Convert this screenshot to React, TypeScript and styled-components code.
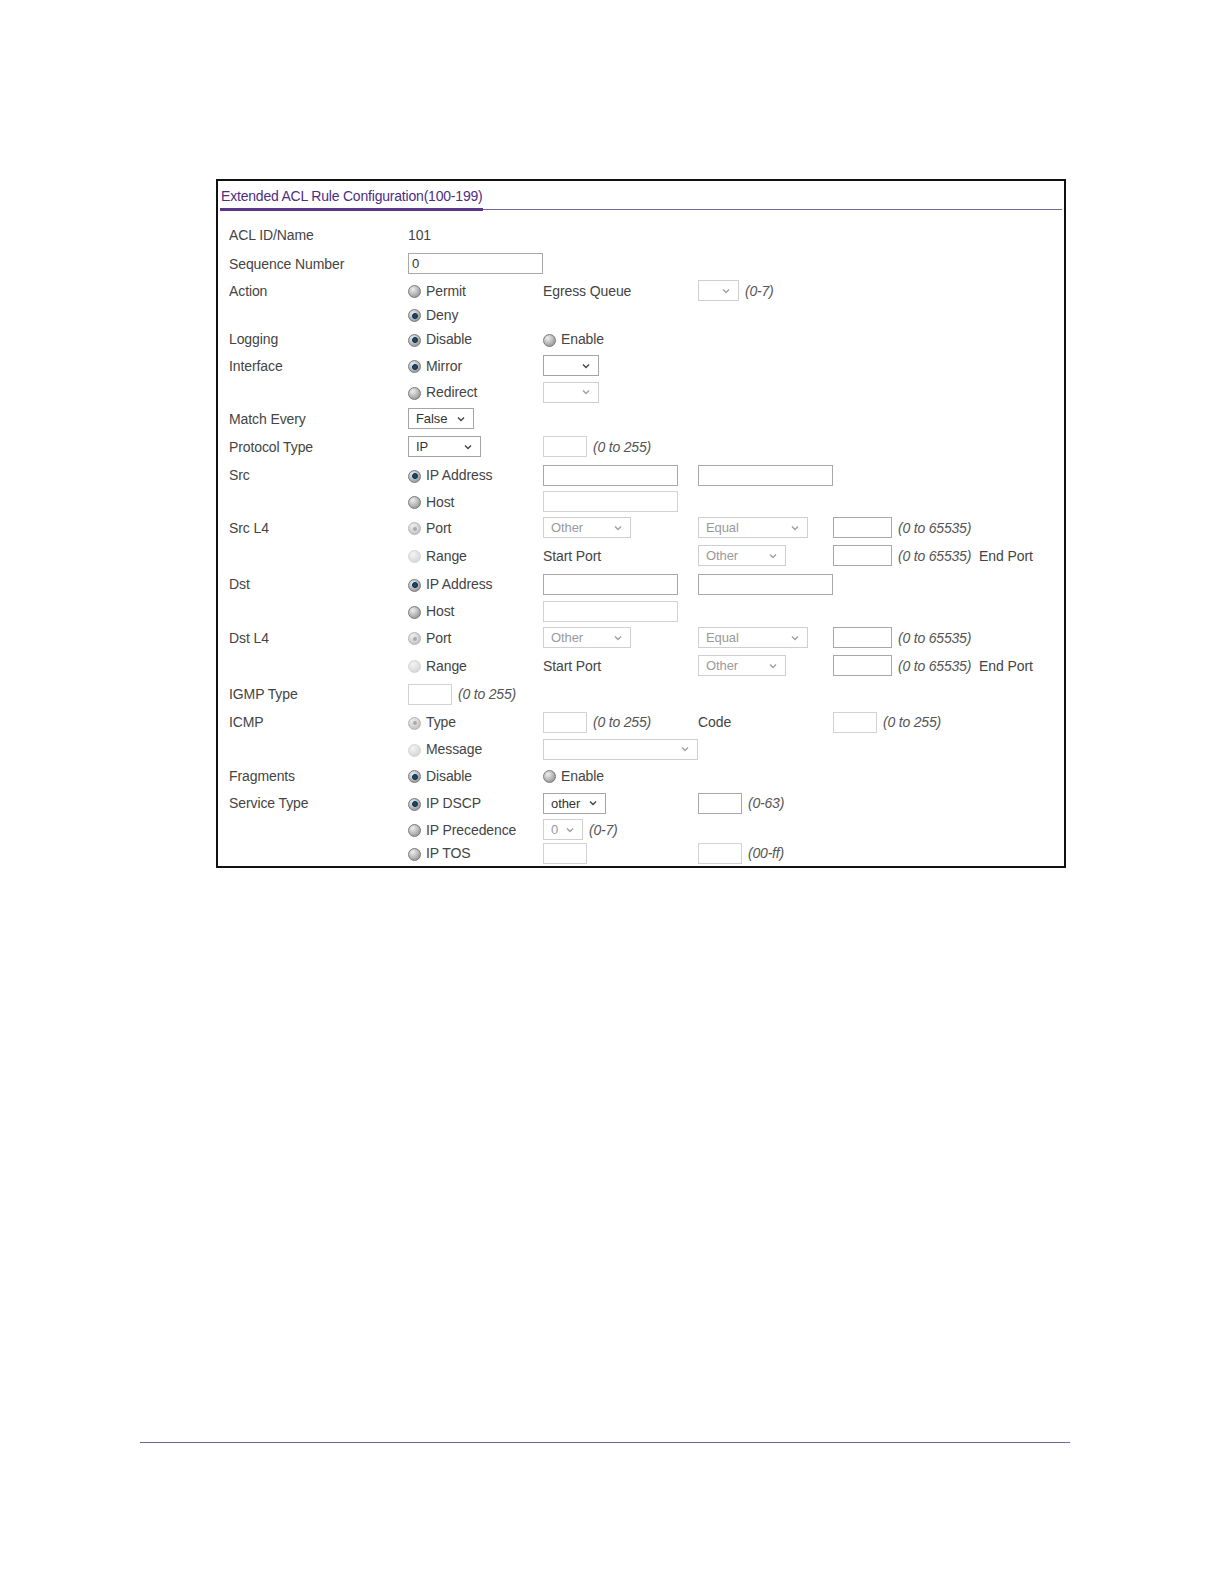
import React from "react";
import styled, { createGlobalStyle, css } from "styled-components";

const GlobalStyle = createGlobalStyle`
  html, body {
    margin: 0;
    padding: 0;
    background: #ffffff;
    overflow: hidden;
  }
  body {
    font-family: "Liberation Sans", Arial, sans-serif;
    font-size: 14px;
    color: #444444;
  }
`;

const Page = styled.div`
  height: 100vh;
  padding-top: 179px;
  box-sizing: border-box;
  display: flex;
  flex-direction: column;
`;

const Frame = styled.div`
  margin-left: 216px;
  width: 850px;
  box-sizing: border-box;
  border: 2px solid #111111;
  padding-bottom: 2px;
`;

const TitleBar = styled.div`
  margin: 0 2px 0 2px;
  height: 28px;
  display: flex;
  align-items: flex-end;
  border-bottom: 1px solid #7c6397;
`;

const Title = styled.span`
  color: #4f2d7f;
  font-size: 14px;
  letter-spacing: -0.2px;
  padding: 0 0 3px 1px;
  border-bottom: 3px solid #5a3688;
  margin-bottom: -2px;
  line-height: 17px;
`;

const Body = styled.div`
  padding: 10px 0 0 11px;
`;

const Row = styled.div<{ $h: number }>`
  height: ${(p) => p.$h}px;
  display: flex;
  align-items: center;
  white-space: nowrap;
`;

const Cell = styled.div<{ $w?: number }>`
  ${(p) =>
    p.$w
      ? css`
          width: ${p.$w}px;
          flex: none;
        `
      : css`
          flex: 1;
        `}
  display: flex;
  align-items: center;
  gap: 6px;
  letter-spacing: -0.1px;
`;

const Hint = styled.span`
  font-style: italic;
  color: #555555;
  letter-spacing: -0.2px;
`;

const Text = styled.span<{ $pad?: number }>`
  color: #444444;
  padding-left: ${(p) => p.$pad ?? 0}px;
`;

const Input = styled.div<{ $w: number; $dim?: boolean; $h?: number }>`
  width: ${(p) => p.$w}px;
  height: ${(p) => p.$h ?? 21}px;
  box-sizing: border-box;
  border: 1px solid ${(p) => (p.$dim ? "#d2d2d2" : "#a8a8a8")};
  background: #ffffff;
  font-size: 13px;
  line-height: 19px;
  padding-left: 3px;
  color: #333333;
`;

const SelectBox = styled.div<{ $w: number; $dim?: boolean }>`
  width: ${(p) => p.$w}px;
  height: 21px;
  box-sizing: border-box;
  border: 1px solid ${(p) => (p.$dim ? "#cfcfcf" : "#a5a5a5")};
  background: #ffffff;
  display: flex;
  align-items: center;
  justify-content: space-between;
  padding: 0 8px 0 7px;
  font-size: 13px;
  color: ${(p) => (p.$dim ? "#9a9a9a" : "#333333")};
`;

const Chevron = styled.svg<{ $dim?: boolean }>`
  width: 8px;
  height: 6px;
  flex: none;
  stroke: ${(p) => (p.$dim ? "#a0a0a0" : "#444444")};
  fill: none;
  stroke-width: 1.4;
`;

const Select = ({ w, value, dim }: { w: number; value?: string; dim?: boolean }) => (
  <SelectBox $w={w} $dim={dim}>
    <span>{value ?? ""}</span>
    <Chevron $dim={dim} viewBox="0 0 8 6">
      <path d="M1 1.5 L4 4.5 L7 1.5" />
    </Chevron>
  </SelectBox>
);

type RadioState = "on" | "off" | "dimOn" | "dimOff";

const RadioDot = styled.span<{ $s: RadioState }>`
  width: 13px;
  height: 13px;
  border-radius: 50%;
  flex: none;
  box-sizing: border-box;
  margin-top: 2px;
  position: relative;
  ${(p) =>
    p.$s === "dimOff"
      ? css`
          background: radial-gradient(circle at 35% 30%, #f4f4f4 0%, #dadada 70%, #cccccc 100%);
          border: 1px solid #d4d4d4;
        `
      : p.$s === "dimOn"
      ? css`
          background: radial-gradient(circle at 35% 30%, #f0f0f0 0%, #c4c4c4 75%, #b0b0b0 100%);
          border: 1px solid #b5b5b5;
        `
      : css`
          background: radial-gradient(circle at 35% 30%, #eeeeee 0%, #a8a8a8 65%, #808080 100%);
          border: 1px solid #7a7a7a;
        `}
  ${(p) =>
    (p.$s === "on" || p.$s === "dimOn") &&
    css`
      &::after {
        content: "";
        position: absolute;
        left: 2.5px;
        top: 2.5px;
        width: 6px;
        height: 6px;
        border-radius: 50%;
        box-sizing: border-box;
        background: ${p.$s === "on" ? "#17486f" : "#a9a9a9"};
        border: 1px solid ${p.$s === "on" ? "#0d2c47" : "#e2e2e2"};
      }
    `}
`;

const RadioWrap = styled.span`
  display: inline-flex;
  align-items: center;
  gap: 5px;
  color: #444444;
`;

const Radio = ({ s, label }: { s: RadioState; label: string }) => (
  <RadioWrap>
    <RadioDot $s={s} />
    <span>{label}</span>
  </RadioWrap>
);

const BottomRule = styled.div`
  margin: auto 0 141px 140px;
  width: 930px;
  height: 1px;
  flex: none;
  background: #7b5e98;
`;

const W = { label: 179, c2: 135, c3: 155, c4: 135 };

const L4Rows = ({ label }: { label: string }) => (
  <>
    <Row $h={27}>
      <Cell $w={W.label}>{label}</Cell>
      <Cell $w={W.c2}>
        <Radio s="dimOn" label="Port" />
      </Cell>
      <Cell $w={W.c3}>
        <Select w={88} value="Other" dim />
      </Cell>
      <Cell $w={W.c4}>
        <Select w={110} value="Equal" dim />
      </Cell>
      <Cell>
        <Input $w={59} />
        <Hint>(0 to 65535)</Hint>
      </Cell>
    </Row>
    <Row $h={29}>
      <Cell $w={W.label} />
      <Cell $w={W.c2}>
        <Radio s="dimOff" label="Range" />
      </Cell>
      <Cell $w={W.c3}>
        <Text>Start Port</Text>
      </Cell>
      <Cell $w={W.c4}>
        <Select w={88} value="Other" dim />
      </Cell>
      <Cell>
        <Input $w={59} />
        <Hint>(0 to 65535)</Hint>
        <Text $pad={2}>End Port</Text>
      </Cell>
    </Row>
  </>
);

const AddrRows = ({ label, h1, h2 }: { label: string; h1: number; h2: number }) => (
  <>
    <Row $h={h1}>
      <Cell $w={W.label}>{label}</Cell>
      <Cell $w={W.c2}>
        <Radio s="on" label="IP Address" />
      </Cell>
      <Cell $w={W.c3}>
        <Input $w={135} />
      </Cell>
      <Cell $w={W.c4}>
        <Input $w={135} />
      </Cell>
    </Row>
    <Row $h={h2}>
      <Cell $w={W.label} />
      <Cell $w={W.c2}>
        <Radio s="off" label="Host" />
      </Cell>
      <Cell $w={W.c3}>
        <Input $w={135} $dim />
      </Cell>
    </Row>
  </>
);

export default function App() {
  return (
    <>
      <GlobalStyle />
      <Page>
        <Frame>
          <TitleBar>
            <Title>Extended ACL Rule Configuration(100-199)</Title>
          </TitleBar>
          <Body>
            <Row $h={29}>
              <Cell $w={W.label}>ACL ID/Name</Cell>
              <Cell $w={W.c2}>101</Cell>
            </Row>
            <Row $h={29}>
              <Cell $w={W.label}>Sequence Number</Cell>
              <Cell $w={W.c2}>
                <Input $w={135}>0</Input>
              </Cell>
            </Row>
            <Row $h={25}>
              <Cell $w={W.label}>Action</Cell>
              <Cell $w={W.c2}>
                <Radio s="off" label="Permit" />
              </Cell>
              <Cell $w={W.c3}>Egress Queue</Cell>
              <Cell $w={W.c4}>
                <Select w={41} dim />
                <Hint>(0-7)</Hint>
              </Cell>
            </Row>
            <Row $h={23}>
              <Cell $w={W.label} />
              <Cell $w={W.c2}>
                <Radio s="on" label="Deny" />
              </Cell>
            </Row>
            <Row $h={26}>
              <Cell $w={W.label}>Logging</Cell>
              <Cell $w={W.c2}>
                <Radio s="on" label="Disable" />
              </Cell>
              <Cell $w={W.c3}>
                <Radio s="off" label="Enable" />
              </Cell>
            </Row>
            <Row $h={27}>
              <Cell $w={W.label}>Interface</Cell>
              <Cell $w={W.c2}>
                <Radio s="on" label="Mirror" />
              </Cell>
              <Cell $w={W.c3}>
                <Select w={56} />
              </Cell>
            </Row>
            <Row $h={26}>
              <Cell $w={W.label} />
              <Cell $w={W.c2}>
                <Radio s="off" label="Redirect" />
              </Cell>
              <Cell $w={W.c3}>
                <Select w={56} dim />
              </Cell>
            </Row>
            <Row $h={27}>
              <Cell $w={W.label}>Match Every</Cell>
              <Cell $w={W.c2}>
                <Select w={66} value="False" />
              </Cell>
            </Row>
            <Row $h={29}>
              <Cell $w={W.label}>Protocol Type</Cell>
              <Cell $w={W.c2}>
                <Select w={73} value="IP" />
              </Cell>
              <Cell $w={W.c3}>
                <Input $w={44} $dim />
                <Hint>(0 to 255)</Hint>
              </Cell>
            </Row>
            <AddrRows label="Src" h1={28} h2={25} />
            <L4Rows label="Src L4" />
            <AddrRows label="Dst" h1={28} h2={26} />
            <L4Rows label="Dst L4" />
            <Row $h={28}>
              <Cell $w={W.label}>IGMP Type</Cell>
              <Cell $w={W.c2}>
                <Input $w={44} $dim />
                <Hint>(0 to 255)</Hint>
              </Cell>
            </Row>
            <Row $h={28}>
              <Cell $w={W.label}>ICMP</Cell>
              <Cell $w={W.c2}>
                <Radio s="dimOn" label="Type" />
              </Cell>
              <Cell $w={W.c3}>
                <Input $w={44} $dim />
                <Hint>(0 to 255)</Hint>
              </Cell>
              <Cell $w={W.c4}>Code</Cell>
              <Cell>
                <Input $w={44} $dim />
                <Hint>(0 to 255)</Hint>
              </Cell>
            </Row>
            <Row $h={26}>
              <Cell $w={W.label} />
              <Cell $w={W.c2}>
                <Radio s="dimOff" label="Message" />
              </Cell>
              <Cell $w={W.c3}>
                <Select w={155} dim />
              </Cell>
            </Row>
            <Row $h={27}>
              <Cell $w={W.label}>Fragments</Cell>
              <Cell $w={W.c2}>
                <Radio s="on" label="Disable" />
              </Cell>
              <Cell $w={W.c3}>
                <Radio s="off" label="Enable" />
              </Cell>
            </Row>
            <Row $h={28}>
              <Cell $w={W.label}>Service Type</Cell>
              <Cell $w={W.c2}>
                <Radio s="on" label="IP DSCP" />
              </Cell>
              <Cell $w={W.c3}>
                <Select w={63} value="other" />
              </Cell>
              <Cell $w={W.c4}>
                <Input $w={44} />
                <Hint>(0-63)</Hint>
              </Cell>
            </Row>
            <Row $h={25}>
              <Cell $w={W.label} />
              <Cell $w={W.c2}>
                <Radio s="off" label="IP Precedence" />
              </Cell>
              <Cell $w={W.c3}>
                <Select w={40} value="0" dim />
                <Hint>(0-7)</Hint>
              </Cell>
            </Row>
            <Row $h={22}>
              <Cell $w={W.label} />
              <Cell $w={W.c2}>
                <Radio s="off" label="IP TOS" />
              </Cell>
              <Cell $w={W.c3}>
                <Input $w={44} $dim />
              </Cell>
              <Cell $w={W.c4}>
                <Input $w={44} $dim />
                <Hint>(00-ff)</Hint>
              </Cell>
            </Row>
          </Body>
        </Frame>
        <BottomRule />
      </Page>
    </>
  );
}
